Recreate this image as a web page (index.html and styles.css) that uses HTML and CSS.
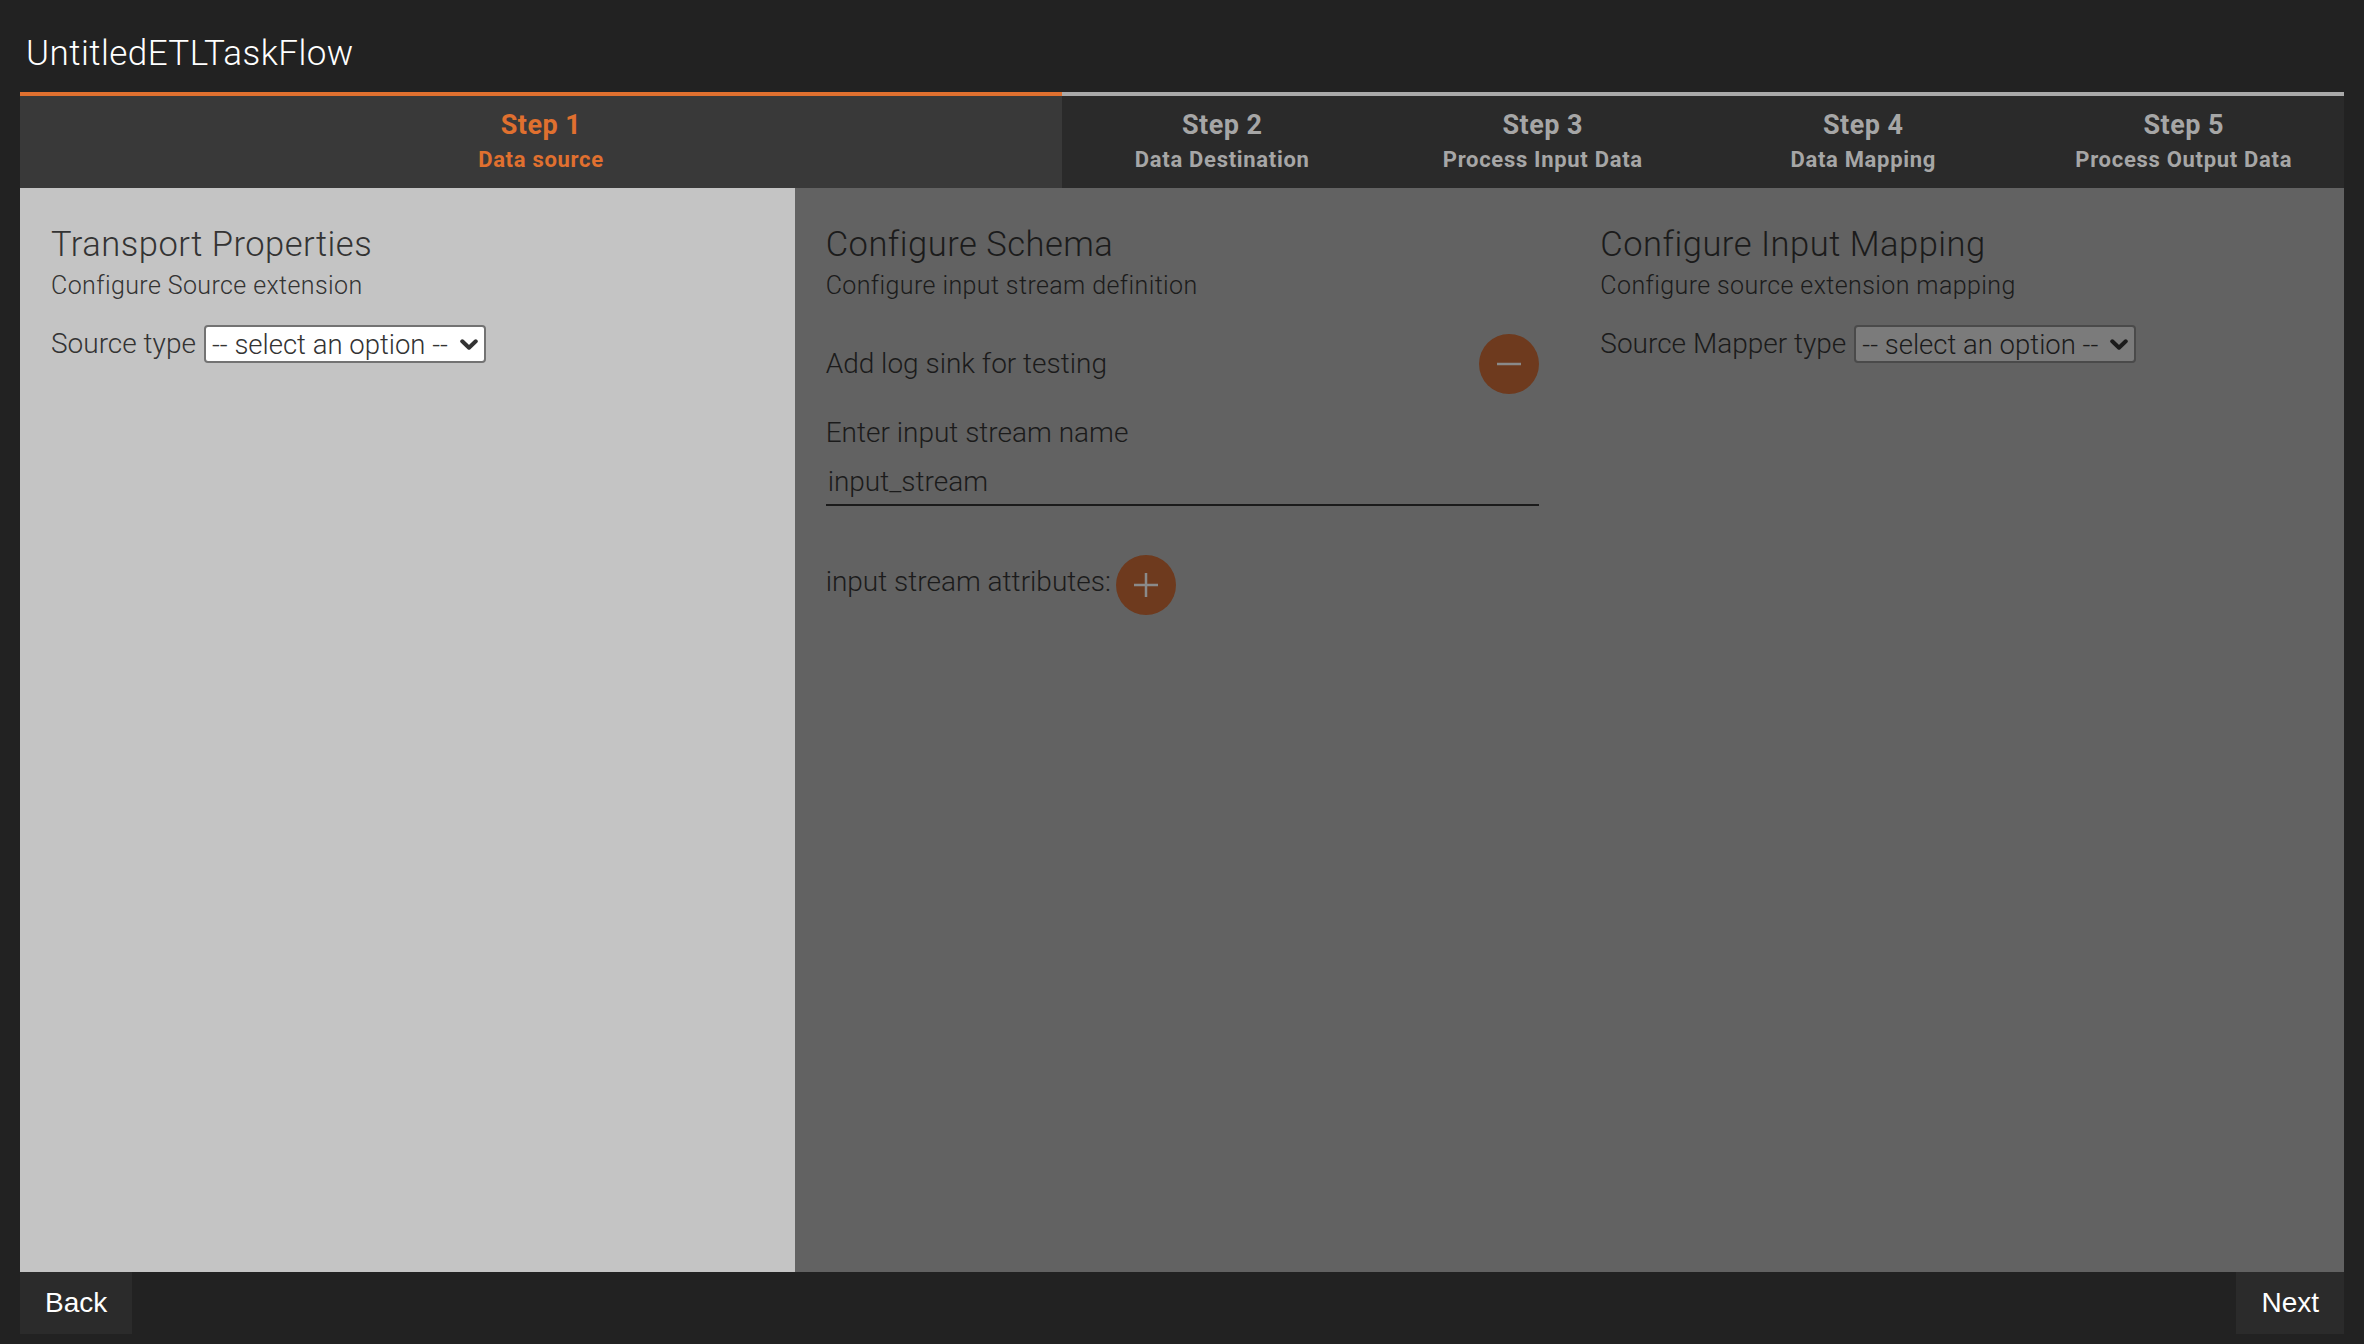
FILE: index.html
```html
<!DOCTYPE html>
<html lang="en">
<head>
    <meta charset="UTF-8">
    <title>UntitledETLTaskFlow</title>
    <link rel="stylesheet" href="styles.css">
</head>
<body>
    <header class="topbar">
        <h1>UntitledETLTaskFlow</h1>
    </header>

    <nav class="steps">
        <div class="step active">
            <span class="step-num">Step 1</span>
            <span class="step-name">Data source</span>
        </div>
        <div class="step">
            <span class="step-num">Step 2</span>
            <span class="step-name">Data Destination</span>
        </div>
        <div class="step">
            <span class="step-num">Step 3</span>
            <span class="step-name">Process Input Data</span>
        </div>
        <div class="step">
            <span class="step-num">Step 4</span>
            <span class="step-name">Data Mapping</span>
        </div>
        <div class="step">
            <span class="step-num">Step 5</span>
            <span class="step-name">Process Output Data</span>
        </div>
    </nav>

    <main class="panels">
        <section class="panel">
            <h2>Transport Properties</h2>
            <p class="subtitle">Configure Source extension</p>
            <div class="field-row">
                <label for="sourceType">Source type</label>
                <span class="select-wrap">
                    <select id="sourceType">
                        <option>-- select an option --</option>
                    </select>
                    <svg class="chevron" viewBox="0 0 20 12" width="18" height="11"><path d="M2.5 2.5 L10 9.5 L17.5 2.5" fill="none" stroke="currentColor" stroke-width="4.5" stroke-linecap="round" stroke-linejoin="round"/></svg>
                </span>
            </div>
        </section>

        <section class="panel dimmed">
            <h2>Configure Schema</h2>
            <p class="subtitle">Configure input stream definition</p>
            <div class="toggle-row">
                <span class="label">Add log sink for testing</span>
                <button class="round-btn" type="button">
                    <svg viewBox="0 0 24 24" width="24" height="24"><path d="M0 12 H24" stroke="currentColor" stroke-width="2.5"/></svg>
                </button>
            </div>
            <label class="label stream-label" for="streamName">Enter input stream name</label>
            <input type="text" id="streamName" class="line-input" value="input_stream">
            <div class="attr-row">
                <span class="label">input stream attributes:</span>
                <button class="round-btn" type="button">
                    <svg viewBox="0 0 24 24" width="24" height="24"><path d="M0 12 H24 M12 0 V24" stroke="currentColor" stroke-width="2.5"/></svg>
                </button>
            </div>
        </section>

        <section class="panel dimmed">
            <h2>Configure Input Mapping</h2>
            <p class="subtitle">Configure source extension mapping</p>
            <div class="field-row">
                <label for="mapperType">Source Mapper type</label>
                <span class="select-wrap">
                    <select id="mapperType">
                        <option>-- select an option --</option>
                    </select>
                    <svg class="chevron" viewBox="0 0 20 12" width="18" height="11"><path d="M2.5 2.5 L10 9.5 L17.5 2.5" fill="none" stroke="currentColor" stroke-width="4.5" stroke-linecap="round" stroke-linejoin="round"/></svg>
                </span>
            </div>
        </section>
    </main>

    <footer class="actions">
        <button class="nav-btn" type="button">Back</button>
        <button class="nav-btn" type="button">Next</button>
    </footer>
</body>
</html>
```

FILE: styles.css
```css
:root {
    --accent: #e0702f;
    --page-bg: #222222;
    --panel-light: #c4c4c4;
    --panel-dim: #626262;
    --step-bg: #2a2a2a;
    --step-active-bg: #393939;
}
html, body {
    height: 100%;
}
body {
    margin: 0;
    padding: 0 20px 10px;
    box-sizing: border-box;
    height: 100vh;
    display: flex;
    flex-direction: column;
    background-color: var(--page-bg);
    font-family: Roboto, "Liberation Sans", sans-serif;
    color: #333;
}
.topbar h1 {
    margin: 0;
    height: 92px;
    box-sizing: border-box;
    padding: 33px 0 0 6px;
    font-size: 35px;
    line-height: 41px;
    font-weight: 300;
    letter-spacing: 0.45px;
    color: #fff;
}

/* wizard steps */
.steps {
    display: flex;
    background-color: var(--step-bg);
}
.step {
    flex: 1;
    display: flex;
    flex-direction: column;
    align-items: center;
    padding: 14px 0 16px;
    border-top: 4px solid #a9a9a9;
    color: #a6a6a6;
    font-weight: 700;
}
.step.active {
    flex: 0 0 1042px;
    border-top-color: var(--accent);
    background-color: var(--step-active-bg);
    color: var(--accent);
}
.step-num {
    font-size: 27px;
    line-height: 30px;
    letter-spacing: 0.5px;
}
.step-name {
    margin-top: 8px;
    font-size: 22px;
    line-height: 24px;
    letter-spacing: 0.7px;
}

/* content panels */
.panels {
    flex: 1;
    display: grid;
    grid-template-columns: 1fr 1fr 1fr;
    background-color: var(--panel-dim);
}
.panel {
    padding: 37px 30px 0 31px;
    background-color: var(--panel-light);
    font-weight: 300;
}
.panel.dimmed {
    background-color: transparent;
    color: #1b1b1b;
}
.panel h2 {
    margin: 0;
    font-size: 34.5px;
    line-height: 38px;
    font-weight: 300;
    letter-spacing: 0.5px;
}
.subtitle {
    margin: 9px 0 0;
    font-size: 25px;
    line-height: 28px;
    letter-spacing: 0.4px;
}
.label, .field-row label {
    font-size: 28px;
    line-height: 38px;
}
.field-row {
    display: flex;
    align-items: center;
    gap: 8px;
    margin-top: 25px;
}
.select-wrap {
    position: relative;
    display: inline-block;
}
.select-wrap select {
    appearance: none;
    -webkit-appearance: none;
    width: 282px;
    height: 38px;
    box-sizing: border-box;
    padding: 0 0 0 6px;
    border: 2px solid #737373;
    border-radius: 4px;
    background-color: #fff;
    font-family: Roboto, "Liberation Sans", sans-serif;
    font-size: 27.5px;
    font-weight: 300;
    color: #333;
}
.select-wrap .chevron {
    position: absolute;
    right: 8px;
    top: 14px;
    color: #333;
    pointer-events: none;
}
.dimmed .select-wrap select {
    background-color: #7b7b7b;
    border-color: #4a4a4a;
    color: #1b1b1b;
}
.dimmed .select-wrap .chevron {
    color: #1b1b1b;
}
.toggle-row {
    display: flex;
    align-items: center;
    justify-content: space-between;
    margin-top: 34px;
}
.round-btn {
    width: 60px;
    height: 60px;
    padding: 0;
    border: none;
    border-radius: 50%;
    background-color: #6e3a1e;
    color: #8a8a8a;
    display: flex;
    align-items: center;
    justify-content: center;
}
.stream-label {
    display: block;
    margin-top: 20px;
}
.line-input {
    display: block;
    width: 100%;
    height: 50px;
    box-sizing: border-box;
    margin-top: 4px;
    padding: 6px 2px 3px;
    border: none;
    border-bottom: 2px solid #1b1b1b;
    background: transparent;
    font-family: Roboto, "Liberation Sans", sans-serif;
    font-size: 28px;
    font-weight: 300;
    color: #1b1b1b;
    outline: none;
}
.attr-row {
    display: flex;
    align-items: center;
    gap: 5px;
    margin-top: 42px;
}
.attr-row .round-btn {
    margin-top: 7px;
}

/* footer */
.actions {
    display: flex;
    justify-content: space-between;
}
.nav-btn {
    height: 62px;
    padding: 0 25px;
    border: none;
    background-color: #2b2b2b;
    color: #fff;
    font-family: "Liberation Sans", Arial, sans-serif;
    font-size: 28px;
    line-height: 62px;
}
```
